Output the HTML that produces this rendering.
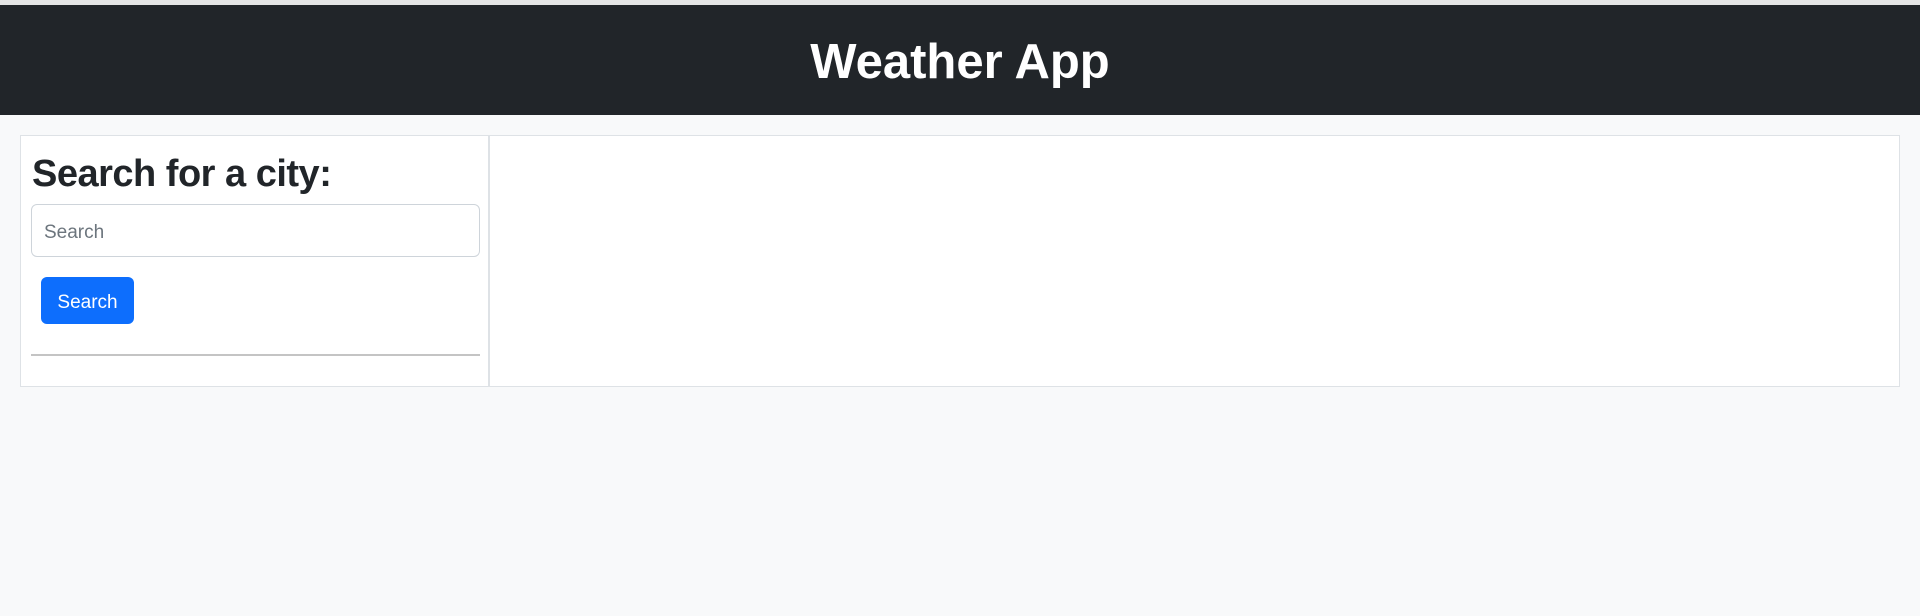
<!DOCTYPE html>
<html><head><style>
*{box-sizing:border-box;margin:0;padding:0}
body{width:1920px;height:616px;background:#f8f9fa;font-family:"Liberation Sans",sans-serif;position:relative;overflow:hidden}
.top{position:absolute;left:0;top:0;width:1920px;height:5px;background:#e5e5e5}
.hdr{position:absolute;left:0;top:5px;width:1920px;height:110px;background:#212529;color:#fff;text-align:center;font-weight:bold;font-size:49px;line-height:114px}
.card{position:absolute;left:20px;top:135px;width:1880px;height:252px;background:#fff;border:1px solid #dee2e6}
.side{position:absolute;left:0;top:0;width:469px;height:250px;border-right:2px solid #dee2e6}
h2{position:absolute;left:11px;top:17px;font-size:38px;font-weight:bold;color:#212529;white-space:nowrap;letter-spacing:-0.5px}
.inp{position:absolute;left:10px;top:68px;width:449px;height:53px;border:1px solid #ced4da;border-radius:6px;font-size:19px;color:#6c757d;padding-left:12px;line-height:55px}
.btn{position:absolute;left:20px;top:141px;width:93px;height:47px;background:#0d6efd;border-radius:6px;color:#fff;font-size:19px;text-align:center;line-height:51px}
.hr{position:absolute;left:10px;top:218px;width:449px;height:2px;background:#c4c4c4}
</style></head><body>
<div class="top"></div>
<div class="hdr">Weather App</div>
<div class="card"><div class="side">
<h2>Search for a city:</h2>
<div class="inp">Search</div>
<div class="btn">Search</div>
<div class="hr"></div>
</div></div>
</body></html>
